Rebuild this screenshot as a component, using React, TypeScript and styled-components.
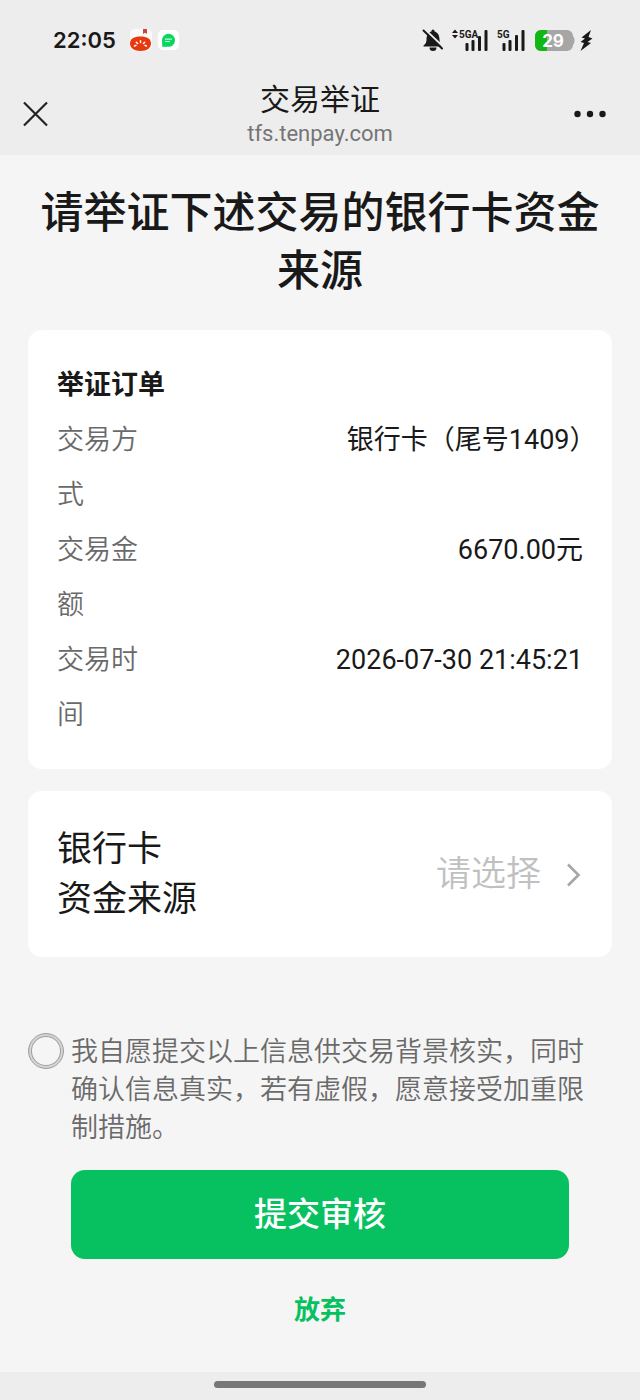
import React, { useState } from "react";
import styled, { createGlobalStyle } from "styled-components";

const GlobalStyle = createGlobalStyle`
  * { box-sizing: border-box; }
  body {
    margin: 0;
    background: #f5f5f5;
    color: #191919;
    font-family: Roboto, "Noto Sans CJK SC", sans-serif;
  }
  h1, h2, p, dl, dd, dt { margin: 0; }
  button { font-family: inherit; border: 0; background: none; padding: 0; cursor: pointer; }
`;

const Page = styled.div`
  min-height: 100vh;
  display: flex;
  flex-direction: column;
`;

const Header = styled.header`
  background: #ededed;
`;

const StatusBar = styled.div`
  height: 80px;
  padding: 0 46px 0 53px;
  display: flex;
  align-items: center;
  justify-content: space-between;
`;

const StatusGroup = styled.div`
  display: flex;
  align-items: center;
`;

const Clock = styled.time`
  font: 600 22px/28px Inter, sans-serif;
  margin-right: 14px;
`;

const NavBar = styled.div`
  height: 75px;
  padding: 0 32px 4px 22px;
  display: grid;
  grid-template-columns: 36px 1fr 36px;
  align-items: center;
`;

const NavButton = styled.button`
  display: flex;
  height: 36px;
  align-items: center;
  padding-bottom: 4px;
`;

const NavTitle = styled.div`
  padding-left: 10px;
  text-align: center;
`;

const NavName = styled.div`
  font-size: 30px;
  line-height: 36px;
`;

const NavHost = styled.div`
  font-size: 22px;
  line-height: 32px;
  color: #757575;
`;

const Main = styled.main`
  flex: 1;
  padding: 29px 28px 0;
  display: flex;
  flex-direction: column;
`;

const Title = styled.h1`
  font-size: 43px;
  line-height: 58px;
  font-weight: 500;
  text-align: center;
  margin-bottom: 30px;
`;

const Card = styled.section`
  background: #fff;
  border-radius: 14px;
  padding: 28px 29px 26px;
  margin-bottom: 22px;
`;

const CardTitle = styled.h2`
  font-size: 27px;
  line-height: 55px;
  font-weight: 700;
`;

const Row = styled.div`
  display: flex;
  justify-content: space-between;
  font-size: 27px;
  line-height: 55px;
`;

const Label = styled.dt`
  width: 100px;
  color: #6a6a6a;
  font-weight: 350;
`;

const Value = styled.dd`
  text-align: right;
`;

const HalfWidth = styled.span`
  font-feature-settings: "halt";
`;

const PickerCard = styled.button`
  width: 100%;
  display: flex;
  align-items: center;
  justify-content: space-between;
  background: #fff;
  border-radius: 14px;
  padding: 34px 29px 32px;
  font-size: 35px;
  line-height: 50px;
  color: #191919;
`;

const PickerLabel = styled.span`
  width: 140px;
  text-align: left;
`;

const PickerValue = styled.span`
  display: flex;
  align-items: center;
  gap: 24px;
  color: #c0c0c0;
  font-weight: 350;
`;

const Agreement = styled.label`
  display: flex;
  gap: 7px;
  margin-top: 76px;
  padding-right: 22px;
  font-size: 27px;
  line-height: 38px;
  color: #6a6a6a;
  font-weight: 350;
`;

const Radio = styled.input`
  appearance: none;
  flex: none;
  width: 36px;
  height: 36px;
  margin: 0;
  border: 1px solid #a0a0a0;
  border-radius: 50%;
  box-shadow: inset 0 0 0 2px #d4d4d4, inset 0 0 0 3px #a0a0a0;
  &:checked { background: #07c160; }
`;

const SubmitButton = styled.button`
  margin: 23px 43px 0;
  height: 89px;
  border-radius: 14px;
  background: #07c160;
  color: #fff;
  font-size: 33px;
  line-height: 48px;
  font-weight: 500;
`;

const GiveUpButton = styled.button`
  align-self: center;
  margin: 31px 0;
  color: #07c160;
  font-size: 26px;
  line-height: 40px;
  font-weight: 700;
`;

const GestureBar = styled.footer`
  height: 28px;
  background: #ededed;
  display: flex;
  align-items: center;
  justify-content: center;
  padding-bottom: 3px;
`;

const GesturePill = styled.div`
  width: 33%;
  height: 7px;
  border-radius: 4px;
  background: #777;
`;

const AppIcons = () => (
  <svg width="50" height="24" viewBox="130 28 50 24" aria-hidden="true">
    <rect x="130" y="29" width="22" height="22" rx="5" fill="#fafafa" />
    <path d="M143 29h4v5l-2-1.300-2 1.300z" fill="#c8463c" />
    <path d="M130 43.500c0-4.500 4-7 10.500-7s10.500 2.500 10.500 7-4 7.500-10.500 7.500-10.500-3-10.500-7.500z" fill="#e8380d" />
    <path d="M134.500 46l1.500-.6M136.300 42.300l1.300 1.200M140.500 40.800v1.700M144.700 42.300l-1.300 1.200M146.500 46l-1.500-.6" stroke="#fff" strokeWidth="1.500" strokeLinecap="round" />
    <rect x="158" y="30" width="21" height="20" rx="5" fill="#fff" />
    <circle cx="168.500" cy="40.300" r="6.500" fill="#07d65f" />
    <path d="M162.200 41v5.800h5z" fill="#07d65f" />
    <path d="M165 39.200h7M165 41.500h5" stroke="#c7f7d8" strokeWidth="1.200" />
  </svg>
);

const StatusIcons = () => (
  <svg width="174" height="28" viewBox="420 26 174 28" aria-hidden="true">
    <g fill="#191919">
      <path d="M423.500 46.500v-1c2.200-1.500 3-3 3-6 0-4.500 2-7.300 5-8v-.6a1.500 1.500 0 0 1 3 0v.6c3 .7 5 3.500 5 8 0 3 .8 4.500 3 6v1z" />
      <path d="M429.500 47.500h7a3.500 3.500 0 0 1-7 0z" />
      <path d="M425 29.500l19 18" stroke="#ededed" strokeWidth="2" />
      <path d="M423.500 30.500l18.500 18" stroke="#191919" strokeWidth="2" strokeLinecap="round" />
      <path d="M452 33l3-3.500 3 3.500zM452 35h6l-3 3.500z" />
      <rect x="465.500" y="43" width="3" height="8" rx="1" />
      <rect x="471.500" y="40" width="3" height="11" rx="1" />
      <rect x="478" y="36" width="3" height="15" rx="1" />
      <rect x="484.500" y="30" width="3" height="21" rx="1" />
      <rect x="502.500" y="43" width="3" height="8" rx="1" />
      <rect x="508.500" y="40" width="3" height="11" rx="1" />
      <rect x="515" y="35" width="3" height="16" rx="1" />
      <rect x="521.500" y="30" width="3" height="21" rx="1" />
      <path d="M591 30l-9.500 7.500 3.500 1-4.500 3.500 3.500 1-3.500 8 10.500-8-3.500-1 5-3.500-4-1.500z" />
    </g>
    <g fill="#191919" fontFamily="Roboto, sans-serif" fontWeight="700" fontSize="10">
      <text x="459" y="38">5GA</text>
      <text x="497" y="38">5G</text>
    </g>
    <path d="M541 30h26a6 6 0 0 1 6 6c2 2 2 7 0 9a6 6 0 0 1-6 6h-26a6 6 0 0 1-6-6v-9a6 6 0 0 1 6-6z" fill="#a6a6a6" />
    <path d="M541 30h6v21h-6a6 6 0 0 1-6-6v-9a6 6 0 0 1 6-6z" fill="#12b812" />
    <text x="553" y="47" textAnchor="middle" fill="#fff" fontFamily="Inter, sans-serif" fontWeight="700" fontSize="17">29</text>
  </svg>
);

const details = [
  { label: "交易方式", value: <>银行卡（尾号1409<HalfWidth>）</HalfWidth></> },
  { label: "交易金额", value: "6670.00元" },
  { label: "交易时间", value: "2026-07-30 21:45:21" },
];

export default function App() {
  const [agreed, setAgreed] = useState(false);
  return (
    <Page lang="zh-CN">
      <GlobalStyle />
      <Header>
        <StatusBar>
          <StatusGroup>
            <Clock>22:05</Clock>
            <AppIcons />
          </StatusGroup>
          <StatusIcons />
        </StatusBar>
        <NavBar>
          <NavButton aria-label="关闭">
            <svg width="28" height="28" viewBox="0 0 28 28" fill="none" stroke="#222" strokeWidth="2.200">
              <path d="M2 2.500l23 23M25 2.500l-23 23" />
            </svg>
          </NavButton>
          <NavTitle>
            <NavName>交易举证</NavName>
            <NavHost>tfs.tenpay.com</NavHost>
          </NavTitle>
          <NavButton aria-label="更多">
            <svg width="36" height="10" viewBox="0 0 36 10" fill="#191919">
              <circle cx="5.500" cy="5" r="3.200" />
              <circle cx="18" cy="5" r="3.200" />
              <circle cx="30.500" cy="5" r="3.200" />
            </svg>
          </NavButton>
        </NavBar>
      </Header>
      <Main>
        <Title>请举证下述交易的银行卡资金来源</Title>
        <Card>
          <CardTitle>举证订单</CardTitle>
          <dl>
            {details.map(({ label, value }) => (
              <Row key={label}>
                <Label>{label}</Label>
                <Value>{value}</Value>
              </Row>
            ))}
          </dl>
        </Card>
        <PickerCard type="button">
          <PickerLabel>银行卡<br />资金来源</PickerLabel>
          <PickerValue>
            请选择
            <svg width="18" height="26" viewBox="0 0 18 26" fill="none" stroke="#a6a6a6" strokeWidth="2.600">
              <path d="M3 2.500l10.500 10.500L3 23.500" />
            </svg>
          </PickerValue>
        </PickerCard>
        <Agreement>
          <Radio type="radio" checked={agreed} onChange={() => setAgreed(true)} />
          <span>我自愿提交以上信息供交易背景核实，同时确认信息真实，若有虚假，愿意接受加重限制措施。</span>
        </Agreement>
        <SubmitButton type="button">提交审核</SubmitButton>
        <GiveUpButton type="button">放弃</GiveUpButton>
      </Main>
      <GestureBar>
        <GesturePill />
      </GestureBar>
    </Page>
  );
}
